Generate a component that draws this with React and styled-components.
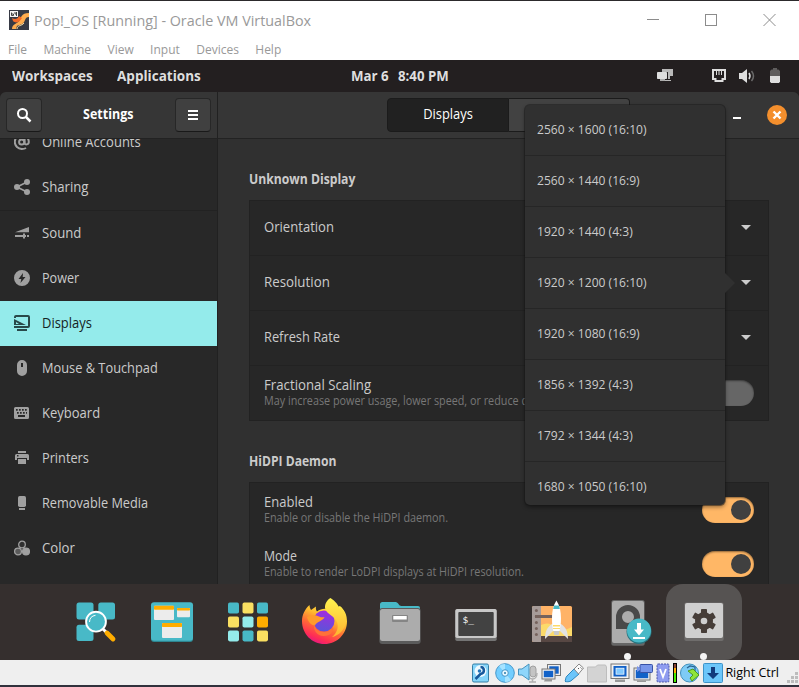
import React from "react";
import styled, { createGlobalStyle, css } from "styled-components";

const Global = createGlobalStyle`
  * { box-sizing: border-box; }
  body { margin: 0; background: #2f2f2f; overflow: hidden; }
  svg { display: block; flex: none; }
`;

const Window = styled.div`
  width: 799px;
  height: 687px;
  display: flex;
  flex-direction: column;
  border-top: 1px solid #2c2a2c;
  border-bottom: 2px solid #31313c;
  background: #fff;
  font-family: "Open Sans", "Noto Sans", sans-serif;
  overflow: hidden;
`;
const T = styled.span`
  display: inline-block;
  white-space: pre;
  transform: scaleX(${(p) => p.$sx || 1});
  transform-origin: ${(p) => (p.$center ? "center" : "left")};
`;

/* ---------- host window ---------- */
const TitleBar = styled.header`
  height: 38px;
  display: flex;
  align-items: center;
  padding: 0 23px 0 9px;
  gap: 5px;
  color: #999;
  font-size: 15px;
`;
const TitleText = styled.div`flex: 1; padding-bottom: 1px;`;
const WindowControls = styled.div`display: flex; gap: 46px; padding-bottom: 1px; color: #8c8c8c;`;
const MenuBar = styled.nav`
  height: 21px;
  display: flex;
  align-items: center;
  padding: 0 0 1px 8px;
  gap: 16.4px;
  color: #999;
  font-size: 12px;
`;

/* ---------- guest top panel ---------- */
const TopPanel = styled.div`
  height: 32px;
  flex: none;
  display: grid;
  grid-template-columns: 351px 1fr auto;
  align-items: center;
  padding: 0 19px 1px 0;
  background: #231f20;
  color: #dedede;
  font-size: 14px;
  font-weight: 700;
`;
const PanelLinks = styled.div`display: flex; gap: 21px; padding-left: 12px;`;
const Clock = styled.div`display: flex; gap: 7px;`;
const Tray = styled.div`display: flex; align-items: center;`;
const TrayIcon = styled.div`margin-left: ${(p) => p.$gap}px;`;

/* ---------- settings ---------- */
const Settings = styled.div`
  position: relative;
  height: 492px;
  flex: none;
  display: flex;
  background: #231f20;
  font-size: 14px;
  color: #cbcbcb;
`;
const Side = styled.aside`
  width: 218px;
  flex: none;
  display: flex;
  flex-direction: column;
  background: #282828;
  border-right: 1px solid #212121;
  border-radius: 6px 0 0 0;
  overflow: hidden;
`;
const HeaderBar = styled.div`
  height: 47px;
  flex: none;
  display: flex;
  align-items: center;
  justify-content: space-between;
  padding: 0 6px;
  background: #363636;
  border-bottom: 1px solid #222;
  color: #fff;
  font-weight: 700;
`;
const HeaderTitle = styled.div`padding-bottom: 3px;`;
const HeaderButton = styled.button`
  width: 36px;
  height: 34px;
  display: grid;
  place-items: center;
  padding: 0;
  border: 1px solid #272727;
  border-bottom-color: #191919;
  border-radius: 4px;
  background: #404040;
`;
const SideList = styled.ul`
  margin: -19px 0 0;
  padding: 0;
  list-style: none;
`;
const SideClip = styled.div`flex: 1; min-height: 0; overflow: hidden;`;
const SideItem = styled.li`
  height: ${(p) => (p.$divided ? 46 : 45)}px;
  display: flex;
  align-items: center;
  gap: 12px;
  padding: 0 14px 1px;
  color: #cbcbcb;
  ${(p) => p.$divided && css`border-top: 1px solid #222;`}
  svg { color: #a0a0a0; }
  span { margin-bottom: 2px; }
  ${(p) => p.$active && css`
    background: #94ebeb;
    color: #142323;
    svg { color: #29494a; }
  `}
`;
const Main = styled.section`
  flex: 1;
  min-width: 0;
  display: flex;
  flex-direction: column;
  background: #303030;
  border-radius: 0 6px 0 0;
  overflow: hidden;
`;
const MainHeader = styled(HeaderBar)`
  justify-content: flex-start;
  padding: 0 12px 0 169px;
`;
const Tab = styled.div`
  width: ${(p) => (p.$active ? 122 : 121)}px;
  height: 34px;
  display: grid;
  place-items: center;
  padding-bottom: 4px;
  border: 1px solid #1b1b1b;
  border-radius: ${(p) => (p.$active ? "4px 0 0 4px" : "0 4px 4px 0")};
  border-left-width: ${(p) => (p.$active ? 1 : 0)}px;
  background: ${(p) => (p.$active ? "#212121" : "#424242")};
  font-weight: 400;
`;
const Minimize = styled.div`width: 8px; height: 2px; margin: 6px 26px 0 103px; background: #fff;`;
const Content = styled.div`
  flex: 1;
  min-height: 0;
  overflow: hidden;
  padding: 31px 30px 0 31px;
`;
const SectionTitle = styled.h2`
  height: 20px;
  margin: 0 0 10px;
  font-size: 14px;
  line-height: 18px;
  font-weight: 700;
`;
const Card = styled.div`
  margin-bottom: 31px;
  border: 1px solid #222;
  background: #272727;
`;
const Row = styled.div`
  height: ${(p) => p.$h}px;
  display: flex;
  align-items: center;
  justify-content: space-between;
  padding: 0 14px ${(p) => p.$lift || 0}px;
  ${(p) => p.$divided && css`border-top: 1px solid #222;`}
`;
const RowText = styled.div`
  display: flex;
  flex-direction: column;
  line-height: 17px;
  padding-bottom: 3px;
`;
const Hint = styled(T)`font-size: 12px; line-height: 15px; color: #777;`;
const Caret = styled.i`
  border: 5px solid transparent;
  border-top-color: #ccc;
  border-bottom-width: 0;
  margin: 2px 3px 0 0;
`;
const Switch = styled.div`
  width: 52px;
  height: 26px;
  padding: 3px;
  display: flex;
  justify-content: ${(p) => (p.$on ? "flex-end" : "flex-start")};
  border-radius: 13px;
  background: ${(p) => (p.$on ? "#ffb766" : "#666")};
  box-shadow: inset 0 1px 2px rgba(0, 0, 0, 0.45);
  &::after { content: ""; width: 20px; height: 20px; border-radius: 50%; background: #404040; }
`;
const Popover = styled.div`
  position: absolute;
  left: 525px;
  top: 13px;
  width: 200px;
  height: 400px;
  border-radius: 5px;
  background: #303030;
  box-shadow: 0 0 0 1px rgba(25, 25, 25, 0.45), 0 2px 4px rgba(0, 0, 0, 0.45);
  &::after {
    content: "";
    position: absolute;
    left: 200px;
    top: 168px;
    border: 10px solid transparent;
    border-left-color: #303030;
    border-right-width: 0;
  }
`;
const PopClip = styled.div`height: 400px; overflow: hidden;`;
const Option = styled.div`
  height: 51px;
  display: flex;
  align-items: center;
  padding: 0 0 2px 12px;
  border-bottom: 1px solid #262626;
  font-size: 13.5px;
`;

/* ---------- dock ---------- */
const Dock = styled.div`
  height: 76px;
  flex: none;
  display: flex;
  padding-left: 58px;
  background: #352f2e;
`;
const DockItem = styled.div`
  width: 76px;
  height: 76px;
  display: flex;
  flex-direction: column;
  align-items: center;
  padding-top: 14px;
  gap: 7px;
  border-radius: 17px;
  background: ${(p) => (p.$active ? "#565352" : "transparent")};
`;
const RunningDot = styled.i`width: 7px; height: 7px; margin-right: 1px; border-radius: 50%; background: #f5f5f5;`;

/* ---------- status bar ---------- */
const StatusBar = styled.footer`
  flex: 1;
  display: flex;
  align-items: center;
  justify-content: flex-end;
  padding: 0 1px 0 0;
  background: #efefef;
  color: #000;
  font-size: 12.5px;
`;
const StatusIcons = styled.div`display: flex; gap: 3px; margin-right: 2px;`;
const Grip = styled.div`align-self: flex-end; margin: 0 0 2px 8px;`;

/* ---------- icons ---------- */
const I16 = ({ children }) => (
  <svg width="16" height="16" viewBox="0 0 16 16" fill="currentColor">{children}</svg>
);
const sideIcons = {
  at: <I16><g fill="none" stroke="currentColor" strokeWidth="2"><circle cx="7.7" cy="8" r="2.6" /><path d="M10.6 5v4c0 2 4.2 2 4.2-1A7 7 0 1 0 8 15c1.600 0 2.900-.3 4-1" /></g></I16>,
  share: <I16><circle cx="3" cy="8" r="3" /><circle cx="13" cy="3" r="3" /><circle cx="13" cy="13" r="3" /><path d="M3 8l10-5M3 8l10 5" stroke="currentColor" strokeWidth="1.700" /></I16>,
  sound: <I16><path d="M1 7.200L15 2v5.200zM1 10h8V8.500h2V10h1v2h-1v1.500H9V12H1zM13 10h2v2h-2z" /></I16>,
  power: <I16><path fillRule="evenodd" d="M8 0a8 8 0 1 0 0 16A8 8 0 0 0 8 0zm1 3L4.500 9H7.300L6.500 13l5-6H8.700z" /></I16>,
  display: <I16><path fillRule="evenodd" d="M2 0h12a2 2 0 0 1 2 2v9a2 2 0 0 1-2 2H0V11h14V2H2v1H0V2a2 2 0 0 1 2-2z" /><path d="M0 4l12 6H0zM3 14h10v2H3z" /><path d="M2 7l3 2H2z" fill="#94ebeb" /></I16>,
  mouse: <I16><path fillRule="evenodd" d="M8 0a5 5 0 0 1 5 5v6a5 5 0 0 1-10 0V5a5 5 0 0 1 5-5zM7 3v4h2V3z" /></I16>,
  keyboard: <I16><path fillRule="evenodd" d="M1.500 2h12A1.500 1.500 0 0 1 15 3.500v9a1.500 1.500 0 0 1-1.500 1.500h-12A1.500 1.500 0 0 1 0 12.500v-9A1.500 1.500 0 0 1 1.500 2zM2 4v1.700h1.700V4zm3 0v1.700h1.700V4zm3 0v1.700h1.700V4zm3 0v1.700h1.700V4zM3 7v1.700h1.700V7zm3 0v1.700h1.700V7zm3 0v1.700h1.700V7zm3 0v1.700h1V7zM4 10v2h7v-2z" /></I16>,
  printer: <I16><path d="M4 1h8v2H4z" /><path fillRule="evenodd" d="M2.500 4h11A1.500 1.500 0 0 1 15 5.500V10h-2V8H3v2H1V5.500A1.500 1.500 0 0 1 2.500 4zM3 5v1.500h1.500V5z" /><path d="M4 9h8v5H4z" /></I16>,
  media: <I16><rect x="4" y="1" width="8" height="11" rx="1.700" /><path d="M5 13h6v2H5z" /></I16>,
  color: <I16><g stroke="currentColor" strokeWidth="1.300"><circle cx="8" cy="4.500" r="3.300" fill="#303030" /><circle cx="4" cy="11.500" r="3.400" fill="#5a5a5a" /><circle cx="12" cy="11.500" r="3.400" /></g></I16>,
};

const dockIcons = {
  search: (
    <>
      <g fill="#48b9c7"><rect x="4.500" y="4.500" width="17" height="17" rx="2.500" /><rect x="26.300" y="4.500" width="16.700" height="17" rx="2.500" /><rect x="4.500" y="26.700" width="17" height="16.300" rx="2.500" /></g>
      <path d="M31 31l3 3" stroke="#fff" strokeWidth="3" />
      <path d="M35 35l6 6" stroke="#ffad00" strokeWidth="4.800" strokeLinecap="round" />
      <circle cx="24" cy="23.700" r="9.900" fill="#48b9c7" stroke="#fff" strokeWidth="1.900" />
      <path d="M17.500 24a7 7 0 0 1 6-6.700" fill="none" stroke="#fff" strokeWidth="1" />
    </>
  ),
  workspaces: (
    <>
      <rect x="3" y="5" width="42" height="39" rx="3" fill="#2e8590" />
      <rect x="3" y="4.300" width="42" height="38.500" rx="3" fill="#48b9c7" />
      {[[6, 7.700, 20, 14.300, 4], [29, 10, 13, 9.300, 2.500], [14, 25, 20, 15, 4]].map(([x, y, w, h, b]) => (
        <g key={x}><rect x={x} y={y} width={w} height={h} rx="1" fill="#ececec" /><rect x={x} y={y} width={w} height={b} rx=".8" fill="#ffad00" /></g>
      ))}
    </>
  ),
  apps: ["#48b9c7", "#fadf61", "#48b9c7", "#fadf61", "#94ebeb", "#ffad00", "#94ebeb", "#48b9c7", "#fadf61"].map((c, i) => (
    <rect key={i} x={4 + (i % 3) * 14.500} y={4.600 + Math.floor(i / 3) * 13.900} width="11" height="11" rx="1.800" fill={c} />
  )),
  firefox: (
    <>
      <defs>
        <linearGradient id="ff1" x1=".8" y1="0" x2=".3" y2="1"><stop offset="0" stopColor="#fff44f" /><stop offset=".35" stopColor="#ffbd2f" /><stop offset=".6" stopColor="#ff6b36" /><stop offset=".85" stopColor="#ff2d55" /><stop offset="1" stopColor="#e31587" /></linearGradient>
        <linearGradient id="ff2" x1=".6" y1="0" x2=".4" y2="1"><stop offset="0" stopColor="#a32be0" /><stop offset="1" stopColor="#5b54d8" /></linearGradient>
        <linearGradient id="ff3" x1="0" y1="0" x2="0" y2="1"><stop offset="0" stopColor="#fff44f" /><stop offset="1" stopColor="#ffb22f" /></linearGradient>
      </defs>
      <path d="M2 23c0-6 3-12 7.500-16 .2 2 .5 3.500 1.500 5l5-3.500c-.4 2 0 3.800 1 5C21 10 27 10 30 12l10-4c5 4.500 7 9 7 15.500C47 36 37 46 24.500 46S2 36 2 23z" fill="url(#ff1)" />
      <circle cx="24" cy="23" r="10.500" fill="url(#ff2)" />
      <path d="M30.500 0c5 3.500 8 6.500 9 11l1.500-2c4 5 5.500 9 5 15-1 8-8 14-14 15 5-4 7-10 5-15-2-6-11-8-12-14-.3-4 2-8 5.500-10z" fill="url(#ff3)" />
      <path d="M7 19c4-2 8-2.500 12-.5 2 1 4 1 5.500.6-.5 2.300-3 3-5 4.400-2 1-4 2-4.500 4-4 0-7-4-8-8.500z" fill="#ff9b2c" />
      <path d="M14 26c1 5 5 8 10 8 4 0 7-2 9-5 1 5-3 9-9 9-6 .5-11-5-10-12z" fill="#ff7139" />
    </>
  ),
  files: (
    <>
      <path d="M4 14V6.500A2.500 2.500 0 0 1 6.500 4h13c3 0 3 4 6 4H42a2 2 0 0 1 2 2v4z" fill="#48b9c7" />
      <rect x="3.300" y="10" width="41.400" height="36" rx="3" fill="#5b5b5b" />
      <rect x="4" y="11" width="40" height="32" rx="2.500" fill="#acacac" />
      <rect x="16" y="17" width="16" height="7" rx="1" fill="#858585" /><rect x="17.300" y="18" width="13.400" height="3.500" fill="#fff" />
    </>
  ),
  terminal: (
    <>
      <rect x="3.300" y="11.500" width="41.400" height="31.500" rx="1.700" fill="#747474" />
      <rect x="3.300" y="11" width="41.400" height="29" rx="1.700" fill="#c8c8c8" />
      <rect x="6.300" y="14" width="35.400" height="24" rx="1" fill="#424242" />
      <text x="10.500" y="24.500" fontSize="9.500" fill="#fff" fontFamily="DejaVu Sans Mono, monospace">$_</text>
    </>
  ),
  shop: (
    <>
      <rect x="4" y="8" width="40" height="36" rx="1.500" fill="#ffb367" />
      <path d="M13 27q8-4 14 2t17 0v9H13z" fill="#fcda6a" /><path d="M13 38h31v6H13z" fill="#574743" />
      <path d="M5.500 8H13v36H5.500A1.500 1.500 0 0 1 4 42.500v-33A1.500 1.500 0 0 1 5.500 8z" fill="#a69b98" />
      <path d="M7 17h17v3H7z" fill="#76635d" />
      <g fill="#76635d">{[12.500, 18.500, 24.500, 30.500, 36.500].map((y) => <circle key={y} cx="8.400" cy={y} r="1.500" />)}</g>
      <path d="M24 26c-5 3-7 8-7 15l8-8h7l8 8c0-7-2-12-7-15z" fill="#e2e2e2" />
      <path d="M28.400 2.500c3.500 5 4.600 11 4.600 18 0 6-1 10-1.500 12.500h-6.200C24.500 30 24 26 24 20.500c0-7 1-13 4.400-18z" fill="#fff" />
      <path d="M26 7.500h5l.8 3.500h-6.600z" fill="#48b9c7" /><path d="M25 27h7v1.500h-7zM25 30h7v1h-7z" fill="#fcda6a" /><path d="M25.500 33h6l-.8 4h-4.400z" fill="#c8c8c8" />
    </>
  ),
  installer: (
    <>
      <rect x="7.300" y="2" width="33.400" height="45.700" rx="2.500" fill="#666" /><rect x="8" y="3" width="32" height="42" rx="2" fill="#acacac" />
      <path fillRule="evenodd" d="M12 31V19a12 12 0 0 1 24 0v12zm12-18a6 6 0 1 0 0 12 6 6 0 0 0 0-12z" fill="#494949" />
      <circle cx="35" cy="33.500" r="12.500" fill="#287580" /><circle cx="35" cy="32.500" r="12" fill="#48b9c7" />
      <path d="M33 25h4v6.500h3L35 37.500l-5-6h3zM29 39h12v2H29z" fill="#fff" />
    </>
  ),
  settings: (
    <>
      <rect x="4.300" y="4.500" width="39.400" height="38.500" rx="2" fill="#6f6d6c" /><rect x="5" y="5" width="38" height="35" rx="2" fill="#cfcfcf" />
      <g fill="#463d38"><circle cx="24" cy="23" r="9" />{[0, 60, 120].map((a) => <rect key={a} x="21" y="11" width="6" height="24" rx=".7" transform={`rotate(${a} 24 23)`} />)}</g>
      <circle cx="24" cy="23" r="3.300" fill="#cfcfcf" />
    </>
  ),
};

const monitor = (x, y, w, h) => (
  <g><rect x={x} y={y} width={w} height={h} fill="#eee" stroke="#777" /><rect x={x + 1.800} y={y + 1.800} width={w - 3.600} height={h - 3.600} fill="#1262c8" /></g>
);
const statusIcons = [
  <g transform="translate(-1.5 0)"><rect x="2" y="1" width="16" height="18" rx="1.500" fill="#85d5fa" stroke="#347fa6" /><circle cx="10" cy="8" r="6" fill="#eefaff" /><path d="M10 4c4 0 5 6 0 7l-5 5" fill="none" stroke="#17599c" strokeWidth="2.500" /><circle cx="9" cy="8" r="1.800" fill="#2277bb" /></g>,
  <><circle cx="10" cy="10" r="9.300" fill="#72ceff" stroke="#4697c9" /><path d="M10 10L4 3a9 9 0 0 1 6-2zM10 10l6 7a9 9 0 0 1-6 2z" fill="#a6e3ff" /><circle cx="10" cy="10" r="3.300" fill="#e8f8ff" stroke="#4697c9" /><circle cx="10" cy="10" r="1" fill="#277cae" /></>,
  <><rect x="12" y="3" width="6" height="11" rx="3" fill="#c4c4c4" stroke="#a0a0a0" /><path d="M10 10c0 8 9 8 9 0M14.500 16v3M11 19h7" fill="none" stroke="#b0b0b0" strokeWidth="1.500" /><path d="M.5 6h3.500l7-5v16l-7-5H.5z" fill="#8fd6fb" stroke="#4593bd" /></>,
  <>{monitor(6.500, 1.500, 13, 11)}{monitor(1, 6, 13, 10)}<path d="M4 16h7v2.500H3z" fill="#999" /></>,
  <><path d="M3 13L10 6l5 5-7 6c-3 3-7 1-6 2l-1-1c1-1 0-3 2-5z" fill="#6bc5fa" stroke="#2d86bd" /><path d="M10 6l5-5 4.500 4-5 6z" fill="#fafafa" stroke="#888" /><path d="M14 5l1 1M16.500 4.500l1 1" stroke="#555" /></>,
  <path d="M.5 4h8l2-2h8l1 2v15H.5z" fill="#d3d3d3" stroke="#bdbdbd" />,
  <><rect x="1" y="1" width="18" height="14.500" fill="#f2f2f2" stroke="#777" /><rect x="3.500" y="3" width="13" height="10.500" fill="#1262c8" /><rect x="6" y="5.200" width="8" height="6" fill="#83caff" stroke="#fff" strokeWidth=".7" /><path d="M5 16.500h10V19H5z" fill="#999" /></>,
  <>{monitor(1, 5, 16, 12)}<path d="M4 17.500h9V19H4z" fill="#999" /><rect x="7" y="1.500" width="12.500" height="8" rx="1" fill="#7896ea" stroke="#3751a5" /><path d="M4 3l3 2v2l-3 2z" fill="#7896ea" /></>,
];

const S20 = ({ w = 20, children }) => <svg width={w} height="20" viewBox={`0 0 ${w} 20`}>{children}</svg>;

const sideItems = [
  ["Online Accounts", "at", 0.93], ["Sharing", "share", 0.94], ["Sound", "sound", 0.94], ["Power", "power", 0.9],
  ["Displays", "display", 0.925], ["Mouse & Touchpad", "mouse", 0.915], ["Keyboard", "keyboard", 0.93],
  ["Printers", "printer", 0.91], ["Removable Media", "media", 0.91], ["Color", "color", 0.94],
];
const options = ["2560 × 1600 (16:10)", "2560 × 1440 (16:9)", "1920 × 1440 (4:3)", "1920 × 1200 (16:10)", "1920 × 1080 (16:9)", "1856 × 1392 (4:3)", "1792 × 1344 (4:3)", "1680 × 1050 (16:10)"];

function Dropdown({ label, sx, divided }) {
  return (
    <Row $h={divided ? 55 : 54} $lift={3} $divided={divided}>
      <T $sx={sx}>{label}</T>
      <Caret />
    </Row>
  );
}
function Toggle({ label, hint, sx, on, divided, h }) {
  return (
    <Row $h={h} $divided={divided}>
      <RowText><T $sx={sx}>{label}</T><Hint $sx={0.9}>{hint}</Hint></RowText>
      <Switch $on={on} />
    </Row>
  );
}

export default function App() {
  return (
    <Window>
      <Global />
      <TitleBar>
        <svg width="20" height="20" viewBox="0 0 20 20">
          <path d="M0 0h20v20H0z" fill="#373a45" />
          <path d="M3 19c0-5 5-5 7-8s2-8 10-8v4c-5 0-3 5-7 7s-5 0-6 5z" fill="#ffac4e" />
          <path d="M3 8c3 2 6 1 7-2l3 2c-2 4-6 6-9 3z" fill="#f36b2a" /><path d="M8 19c0-4 5-3 7-6" stroke="#ffe4a8" fill="none" />
          <path d="M1 1h8v6H1z" fill="#f5f5f5" /><path d="M2.500 2.500v3h2v-1.500h-2M6 2v2h2M7.500 2v4" stroke="#333" fill="none" strokeWidth=".9" />
        </svg>
        <TitleText><T $sx={0.956}>Pop!_OS [Running] - Oracle VM VirtualBox</T></TitleText>
        <WindowControls>
          <svg width="12" height="12" viewBox="0 0 12 12"><path d="M0 5.500h12" stroke="currentColor" /></svg>
          <svg width="12" height="12" viewBox="0 0 12 12"><rect x=".5" y=".5" width="11" height="11" fill="none" stroke="currentColor" /></svg>
          <svg width="13" height="12" viewBox="0 0 13 12"><path d="M.5 0l12 12M12.500 0L.5 12" stroke="currentColor" /></svg>
        </WindowControls>
      </TitleBar>
      <MenuBar>{["File", "Machine", "View", "Input", "Devices", "Help"].map((m) => <T key={m}>{m}</T>)}</MenuBar>

      <TopPanel>
        <PanelLinks><T $sx={0.96}>Workspaces</T><T $sx={0.966}>Applications</T></PanelLinks>
        <Clock><T $sx={0.95}>Mar 6</T><T $sx={0.945}>8:40 PM</T></Clock>
        <Tray>
          <svg width="16" height="15" viewBox="0 0 16 15"><path d="M5 1h11v7h-3v3h-2V4H5zM4 12h10v1H4z" fill="#b9b9b9" /><rect x="0" y="4" width="10" height="7" rx=".8" fill="#dedede" /><path d="M3 11h5v2H3z" fill="#aaa" /></svg>
          <TrayIcon $gap={39}><svg width="14" height="13" viewBox="0 0 14 13"><path d="M1 1h12v9h-2.500v2h-7v-2H1z" fill="none" stroke="#dedede" strokeWidth="2" /><path d="M4.500 2v4M7 2v4M9.500 2v4" stroke="#dedede" strokeWidth="1" /></svg></TrayIcon>
          <TrayIcon $gap={13}><svg width="16" height="14" viewBox="0 0 16 14"><path d="M0 4h3l5-4v14l-5-4H0z" fill="#dedede" /><path d="M10 4q2 3 0 6" stroke="#dedede" strokeWidth="1.500" fill="none" /><path d="M12.500 2q4 5 0 10" stroke="#6a6a6a" strokeWidth="1.500" fill="none" /></svg></TrayIcon>
          <TrayIcon $gap={15}><svg width="10" height="15" viewBox="0 0 10 15"><path d="M3 0h4v1.500h1.500L10 3v5H0V3l1.500-1.500H3z" fill="#5f5d5d" /><path d="M0 8h10v5.500L9 15H1l-1-1.500z" fill="#dedede" /></svg></TrayIcon>
        </Tray>
      </TopPanel>

      <Settings>
        <Side>
          <HeaderBar>
            <HeaderButton><svg width="16" height="16" viewBox="0 0 16 16" fill="none" stroke="#fff" strokeWidth="2"><circle cx="6.500" cy="6.500" r="4.500" /><path d="M10 10l4.500 4.500" strokeWidth="2.500" /></svg></HeaderButton>
            <HeaderTitle><T $sx={0.89} $center>Settings</T></HeaderTitle>
            <HeaderButton><svg width="12" height="12" viewBox="0 0 12 12"><path d="M1 1h10v2H1zM1 5h10v2H1zM1 9h10v2H1z" fill="#fff" /></svg></HeaderButton>
          </HeaderBar>
          <SideClip>
            <SideList>
              {sideItems.map(([name, icon, sx]) => (
                <SideItem key={name} $active={name === "Displays"} $divided={name === "Sound"}>
                  {sideIcons[icon]}<T $sx={sx}>{name}</T>
                </SideItem>
              ))}
            </SideList>
          </SideClip>
        </Side>
        <Main>
          <MainHeader>
            <Tab $active><T $sx={0.92} $center>Displays</T></Tab><Tab />
            <Minimize />
            <svg width="20" height="20" viewBox="0 0 20 20"><circle cx="10" cy="10" r="10" fill="#f48f2d" /><path d="M6.500 6.500l7 7M13.500 6.500l-7 7" stroke="#fff" strokeWidth="2.400" /></svg>
          </MainHeader>
          <Content>
            <SectionTitle><T $sx={0.87}>Unknown Display</T></SectionTitle>
            <Card>
              <Dropdown label="Orientation" sx={0.935} />
              <Dropdown label="Resolution" sx={0.95} divided />
              <Dropdown label="Refresh Rate" sx={0.915} divided />
              <Toggle label="Fractional Scaling" sx={0.945} hint="May increase power usage, lower speed, or reduce d" divided h={55} />
            </Card>
            <SectionTitle><T $sx={0.865}>HiDPI Daemon</T></SectionTitle>
            <Card>
              <Toggle label="Enabled" sx={0.93} hint="Enable or disable the HiDPI daemon." on h={54} />
              <Toggle label="Mode" sx={0.88} hint="Enable to render LoDPI displays at HiDPI resolution." on h={54} />
            </Card>
          </Content>
        </Main>
        <Popover><PopClip>{options.map((o) => <Option key={o}><T $sx={0.895}>{o}</T></Option>)}</PopClip></Popover>
      </Settings>

      <Dock>
        {Object.entries(dockIcons).map(([name, art]) => (
          <DockItem key={name} $active={name === "settings"}>
            <svg width="48" height="48" viewBox="0 0 48 48">{art}</svg>
            {(name === "installer" || name === "settings") && <RunningDot />}
          </DockItem>
        ))}
      </Dock>

      <StatusBar>
        <StatusIcons>
          {statusIcons.map((art, i) => <S20 key={i}>{art}</S20>)}
          <S20 w={14}><rect x="1" y="1" width="12" height="18" rx="1" fill="#8f9cf0" stroke="#4a57a8" strokeDasharray="2 1" /><path d="M4 6l3 8 3-8" fill="none" stroke="#fff" strokeWidth="1.800" /></S20>
          <S20 w={4}><path d="M0 0h4v20H0z" fill="#000" /><path d="M1 1h2v6H1z" fill="#843" /><path d="M1 5h2v5H1z" fill="#fa0" /><path d="M1 10h2v9H1z" fill="#4e0" /></S20>
          <S20><circle cx="9.500" cy="10" r="9" fill="#7ecbf5" stroke="#3f8fbd" /><path d="M7 5l3-2 5 1v4" fill="none" stroke="#28608f" strokeWidth="1.200" /><path d="M8 8l5-2 6 6-7 6-2-3 3-3z" fill="#8fe43a" stroke="#4d9a1c" /></S20>
          <S20><rect x=".5" y=".5" width="19" height="19" rx="1" fill="#6cc6fa" stroke="#3e93c8" /><path d="M8 4h4v6h4l-6 6-6-6h4z" fill="#123a7c" /></S20>
        </StatusIcons>
        <T>Right Ctrl</T>
        <Grip><svg width="11" height="11" viewBox="0 0 11 11" fill="#bcbcbc"><path d="M8 0h3v3H8zM4 4h3v3H4zM8 4h3v3H8zM0 8h3v3H0zM4 8h3v3H4zM8 8h3v3H8z" /></svg></Grip>
      </StatusBar>
    </Window>
  );
}
